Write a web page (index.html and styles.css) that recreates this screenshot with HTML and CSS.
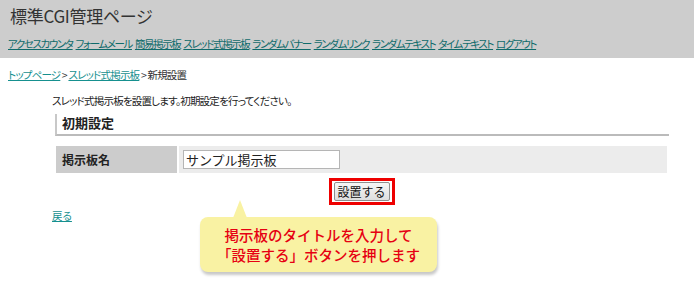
FILE: index.html
```html
<!DOCTYPE html>
<html lang="ja">
<head>
<meta charset="utf-8">
<title>標準CGI管理ページ</title>
<link rel="stylesheet" href="styles.css">
</head>
<body>
<div class="page">
  <header class="header">
    <h1 class="title">標準CGI管理ページ</h1>
    <nav class="nav">
      <a href="#">アクセスカウンタ</a>
      <a href="#">フォームメール</a>
      <a href="#">簡易掲示板</a>
      <a href="#">スレッド式掲示板</a>
      <a href="#">ランダムバナー</a>
      <a href="#">ランダムリンク</a>
      <a href="#">ランダムテキスト</a>
      <a href="#">タイムテキスト</a>
      <a href="#">ログアウト</a>
    </nav>
  </header>
  <main class="main">
    <div class="crumbs"><a href="#">トップページ</a> &gt; <a href="#">スレッド式掲示板</a> &gt; 新規設置</div>
    <p class="desc">スレッド式掲示板を設置します。初期設定を行ってください。</p>
    <h2 class="section">初期設定</h2>
    <div class="form-row">
      <div class="label">掲示板名</div>
      <div class="value"><input class="field" type="text" value="サンプル掲示板"></div>
    </div>
    <div class="actions">
      <span class="highlight"><button class="btn" type="button">設置する</button></span>
    </div>
    <a class="back" href="#">戻る</a>
    <div class="bubble">掲示板のタイトルを入力して<br>「設置する」ボタンを押します</div>
  </main>
</div>
</body>
</html>
```

FILE: styles.css
```css
html, body {
  margin: 0;
  padding: 0;
  background: #fff;
}
body {
  font-family: "Noto Sans CJK JP", "Liberation Sans", sans-serif;
  font-feature-settings: "palt";
  color: #222;
  width: 694px;
  height: 295px;
  overflow: hidden;
}
.page {
  position: relative;
}
.header {
  background: #cdcdcd;
  height: 58px;
  box-sizing: border-box;
  padding: 5px 8px 0 8px;
}
.title {
  margin: 0 0 0 2px;
  font-size: 17px;
  line-height: 22px;
  font-weight: normal;
  color: #333;
  letter-spacing: -0.3px;
}
.nav {
  margin-top: 10px;
  font-size: 10.5px;
  line-height: 14px;
  white-space: nowrap;
  letter-spacing: -1.4px;
}
.nav a {
  color: #0f6b6b;
  text-decoration: underline;
  margin-right: 2px;
}
.main {
  position: relative;
  padding: 10px 8px 0 8px;
}
.crumbs {
  font-size: 10.5px;
  line-height: 14px;
  letter-spacing: -0.8px;
  color: #333;
}
.crumbs a, .back {
  color: #16908f;
  text-decoration: underline;
}
.desc {
  margin: 12px 0 0 44px;
  font-size: 10.5px;
  line-height: 14px;
  letter-spacing: -0.8px;
  color: #222;
}
.section {
  margin: 6px 0 0 47px;
  width: 607px;
  height: 20px;
  border-left: 2px solid #c8c8c8;
  border-bottom: 2px solid #bbbbbb;
  padding-left: 5px;
  font-size: 13px;
  line-height: 18px;
  font-weight: bold;
  color: #222;
}
.form-row {
  margin: 10px 0 0 48px;
  width: 611px;
  height: 27px;
  display: grid;
  grid-template-columns: 121px 1fr;
  column-gap: 2px;
}
.label {
  background: #cccccc;
  font-size: 12px;
  font-weight: bold;
  line-height: 27px;
  padding-left: 6px;
  color: #222;
}
.value {
  background: #ececec;
  display: flex;
  align-items: center;
  padding-left: 4px;
}
.field {
  width: 157px;
  height: 19px;
  box-sizing: border-box;
  border: 1px solid #b5b5b5;
  background: #fff;
  font-family: "Noto Sans CJK JP", sans-serif;
  font-size: 13px;
  padding: 0 2px;
  margin: 0;
  color: #222;
}
.actions {
  width: 611px;
  margin: 5px 0 0 48px;
  display: flex;
  justify-content: center;
}
.highlight {
  display: inline-flex;
  border: 3px solid #ee0000;
  padding: 1px 2px;
  background: #fff;
}
.btn {
  width: 56px;
  height: 19px;
  box-sizing: border-box;
  padding: 0;
  font-family: "Noto Sans CJK JP", sans-serif;
  font-size: 12px;
  line-height: 15px;
  color: #111;
  background: linear-gradient(#f6f6f6, #dedede);
  border: 1px solid #8e8e8e;
  border-radius: 2px;
}
.back {
  display: block;
  width: max-content;
  margin: 4px 0 0 44px;
  font-size: 10.5px;
  line-height: 14px;
}
.bubble {
  position: absolute;
  left: 200px;
  top: 159px;
  width: 237px;
  height: 55px;
  box-sizing: border-box;
  padding-top: 8px;
  background: #f9f2a3;
  border-radius: 8px;
  box-shadow: 1px 3px 3px rgba(0, 0, 0, 0.22);
  text-align: center;
  color: #e60012;
  font-size: 14.5px;
  line-height: 20px;
  font-weight: 500;
  font-feature-settings: normal;
}
.bubble::before {
  content: "";
  position: absolute;
  left: 33px;
  top: -17px;
  border-left: 7px solid transparent;
  border-right: 7px solid transparent;
  border-bottom: 18px solid #f9f2a3;
}
```
